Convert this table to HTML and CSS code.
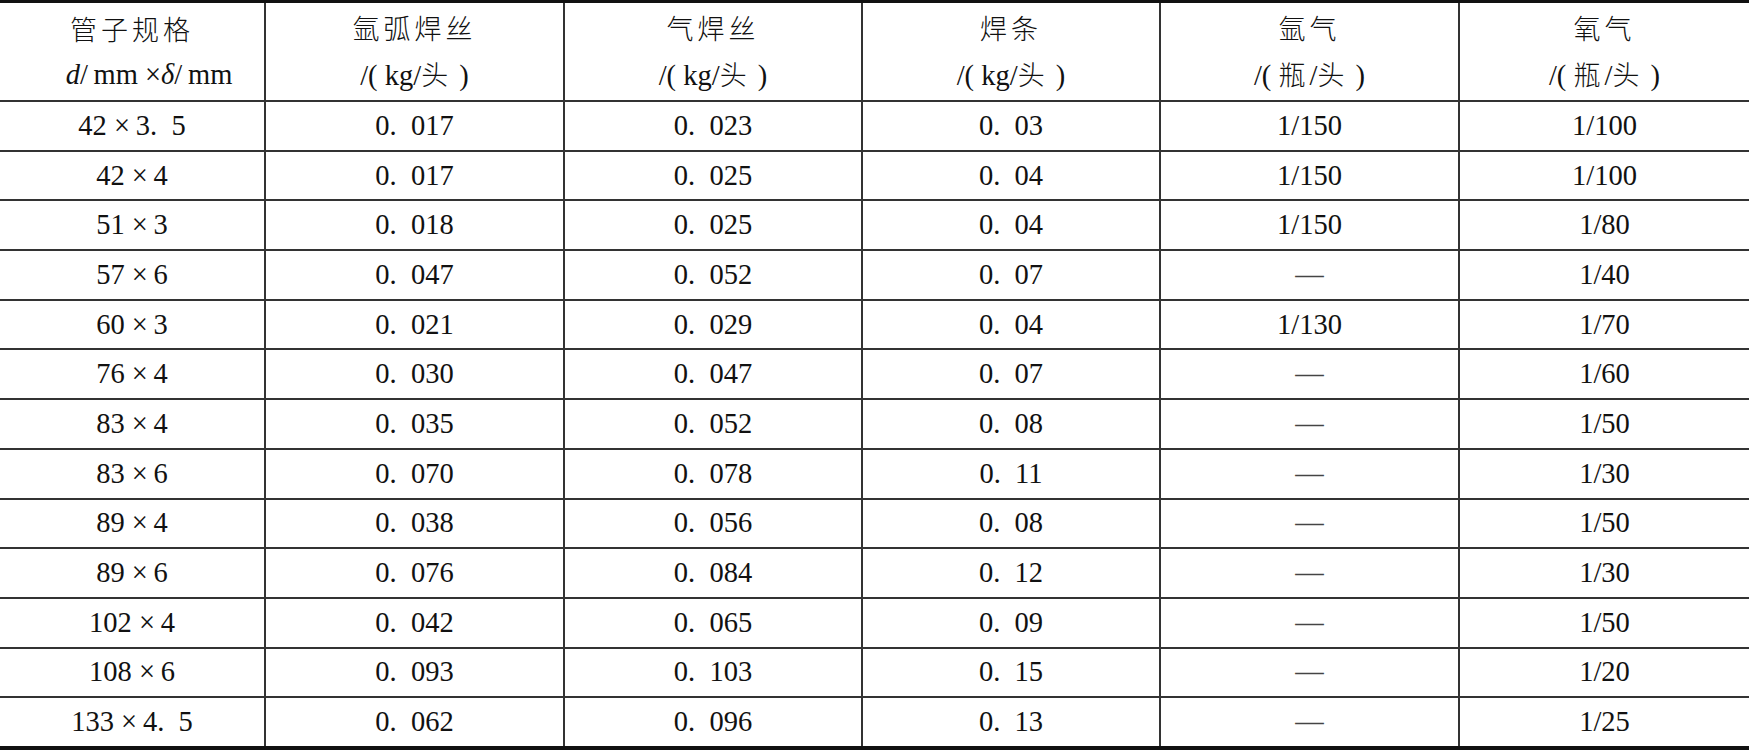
FILE: index.html
```html
<!DOCTYPE html>
<html lang="zh-CN">
<head>
    <meta charset="UTF-8">
    <meta name="viewport" content="width=device-width, initial-scale=1.0">
    <title>管子焊接材料消耗</title>
    <link rel="stylesheet" href="styles.css">
</head>
<body>
    <table class="weld-table">
        <colgroup>
            <col class="c1">
            <col class="c2">
            <col class="c3">
            <col class="c4">
            <col class="c5">
            <col class="c6">
        </colgroup>
        <thead>
            <tr>
                <th><span class="zh">管子规格</span><br><span class="unit"><i>d</i>/&thinsp;mm ×<i>δ</i>/&thinsp;mm</span></th>
                <th><span class="zh">氩弧焊丝</span><br>/( kg/<span class="zh">头</span> )</th>
                <th><span class="zh">气焊丝</span><br>/( kg/<span class="zh">头</span> )</th>
                <th><span class="zh">焊条</span><br>/( kg/<span class="zh">头</span> )</th>
                <th><span class="zh">氩气</span><br>/( <span class="zh">瓶</span>/<span class="zh">头</span> )</th>
                <th><span class="zh">氧气</span><br>/( <span class="zh">瓶</span>/<span class="zh">头</span> )</th>
            </tr>
        </thead>
        <tbody>
            <tr><td>42 ×&thinsp;3.&ensp;5</td><td>0.&ensp;017</td><td>0.&ensp;023</td><td>0.&ensp;03</td><td>1/150</td><td>1/100</td></tr>
            <tr><td>42 ×&thinsp;4</td><td>0.&ensp;017</td><td>0.&ensp;025</td><td>0.&ensp;04</td><td>1/150</td><td>1/100</td></tr>
            <tr><td>51 ×&thinsp;3</td><td>0.&ensp;018</td><td>0.&ensp;025</td><td>0.&ensp;04</td><td>1/150</td><td>1/80</td></tr>
            <tr><td>57 ×&thinsp;6</td><td>0.&ensp;047</td><td>0.&ensp;052</td><td>0.&ensp;07</td><td class="dash">—</td><td>1/40</td></tr>
            <tr><td>60 ×&thinsp;3</td><td>0.&ensp;021</td><td>0.&ensp;029</td><td>0.&ensp;04</td><td>1/130</td><td>1/70</td></tr>
            <tr><td>76 ×&thinsp;4</td><td>0.&ensp;030</td><td>0.&ensp;047</td><td>0.&ensp;07</td><td class="dash">—</td><td>1/60</td></tr>
            <tr><td>83 ×&thinsp;4</td><td>0.&ensp;035</td><td>0.&ensp;052</td><td>0.&ensp;08</td><td class="dash">—</td><td>1/50</td></tr>
            <tr><td>83 ×&thinsp;6</td><td>0.&ensp;070</td><td>0.&ensp;078</td><td>0.&ensp;11</td><td class="dash">—</td><td>1/30</td></tr>
            <tr><td>89 ×&thinsp;4</td><td>0.&ensp;038</td><td>0.&ensp;056</td><td>0.&ensp;08</td><td class="dash">—</td><td>1/50</td></tr>
            <tr><td>89 ×&thinsp;6</td><td>0.&ensp;076</td><td>0.&ensp;084</td><td>0.&ensp;12</td><td class="dash">—</td><td>1/30</td></tr>
            <tr><td>102 ×&thinsp;4</td><td>0.&ensp;042</td><td>0.&ensp;065</td><td>0.&ensp;09</td><td class="dash">—</td><td>1/50</td></tr>
            <tr><td>108 ×&thinsp;6</td><td>0.&ensp;093</td><td>0.&ensp;103</td><td>0.&ensp;15</td><td class="dash">—</td><td>1/20</td></tr>
            <tr><td>133 ×&thinsp;4.&ensp;5</td><td>0.&ensp;062</td><td>0.&ensp;096</td><td>0.&ensp;13</td><td class="dash">—</td><td>1/25</td></tr>
        </tbody>
    </table>
</body>
</html>
```

FILE: styles.css
```css
body {
    margin: 0;
    padding: 0;
    background: #fff;
    font-family: "Liberation Serif", "Noto Sans CJK SC", serif;
    color: #111;
}

.weld-table {
    width: 1749px;
    border-collapse: collapse;
    table-layout: fixed;
    border-top: 3px solid #111;
    border-bottom: 4px solid #111;
    font-size: 28.5px;
}

.c1 { width: 265px; }
.c2 { width: 299px; }
.c3 { width: 298px; }
.c4 { width: 298px; }
.c5 { width: 299px; }
.c6 { width: 290px; }

th,
td {
    padding: 0;
    text-align: center;
    border-left: 2px solid #333;
    border-bottom: 2px solid #333;
    font-weight: normal;
}

th:first-child,
td:first-child {
    border-left: none;
}

tbody tr:last-child td {
    border-bottom: none;
}

th {
    height: 96px;
    line-height: 44px;
    padding-top: 1px;
}

td {
    height: 47.7px;
    line-height: 30px;
}

.zh {
    font-family: "Noto Sans CJK SC", sans-serif;
    font-weight: 300;
    font-size: 27px;
    letter-spacing: 4px;
}

.unit {
    margin-left: 34px;
}

.dash {
    color: #444;
}
```
